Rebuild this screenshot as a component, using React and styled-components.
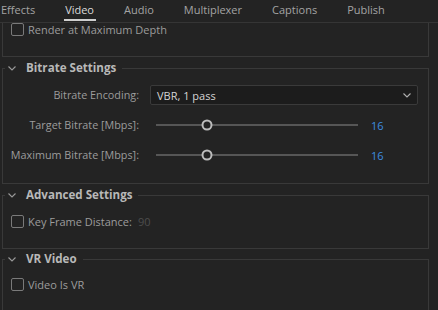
import React from 'react'
import styled, { createGlobalStyle } from 'styled-components'

const GlobalStyle = createGlobalStyle`
  html, body {
    margin: 0;
    padding: 0;
    background: #232323;
  }
  body {
    font-family: "Open Sans", "Noto Sans", sans-serif;
    font-size: 11px;
    color: #a2a2a2;
    overflow: hidden;
  }
`

const Page = styled.div`
  width: 438px;
  height: 310px;
  overflow: hidden;
  background: #232323;
`

// tabs across the top
const TabBar = styled.div`
  display: flex;
  gap: 30px;
  height: 22px;
  padding-left: 1px;
  border-bottom: 1px solid #353535;
`

const Tab = styled.div`
  position: relative;
  line-height: 20px;
  color: ${(p) => (p.$active ? '#dadada' : '#a3a3a3')};

  &::after {
    content: '';
    display: ${(p) => (p.$active ? 'block' : 'none')};
    position: absolute;
    left: -1px;
    right: -2px;
    top: 19px;
    height: 2px;
    background: #cfcfcf;
  }
`

const Content = styled.div`
  display: flex;
  flex-direction: column;
  padding: 0 9px 0 2px;
`

const Panel = styled.fieldset`
  margin: ${(p) => p.$gap || 0}px 0 0;
  padding: 0;
  min-width: 0;
  border: 1px solid #393939;
  border-top: ${(p) => (p.$clipped ? 'none' : '1px solid #393939')};
`

const Legend = styled.legend`
  display: flex;
  align-items: center;
  gap: 10px;
  margin-left: 2px;
  padding: 0 6px 0 3px;
  height: 16px;
  line-height: 16px;
  font-size: 11.6px;
  font-weight: 700;
  color: #b8b8b8;
`

const Body = styled.div`
  padding: ${(p) => p.$pad};
`

const FormGrid = styled.div`
  display: grid;
  grid-template-columns: 136px 1fr;
  column-gap: 11px;
  row-gap: 10px;
  align-items: center;
`

const Label = styled.div`
  text-align: right;
  white-space: nowrap;
  font-size: 10.8px;
  color: #9c9c9c;
  line-height: 20px;
`

const Select = styled.div`
  display: flex;
  align-items: center;
  justify-content: space-between;
  height: 18px;
  padding: 0 6px 0 6px;
  background: #1c1c1c;
  border: 1px solid #3a3a3a;
  border-radius: 2px;
  color: #d4d4d4;
`

const SliderRow = styled.div`
  display: flex;
  align-items: center;
  height: 20px;
`

const Track = styled.div`
  position: relative;
  width: 202px;
  height: 20px;
  margin-left: 6px;

  &::before {
    content: '';
    position: absolute;
    left: 0;
    right: 0;
    top: 9px;
    height: 2px;
    background: #565656;
  }
`

const Thumb = styled.div`
  position: absolute;
  top: 10px;
  width: 7px;
  height: 7px;
  border: 2px solid #bdbdbd;
  border-radius: 50%;
  background: #232323;
  transform: translate(-50%, -50%);
`

const Value = styled.span`
  margin-left: ${(p) => (p.$dim ? 2 : 13)}px;
  color: ${(p) => (p.$dim ? '#4d4d4d' : '#3d8de0')};
`

const CheckRow = styled.label`
  display: flex;
  align-items: center;
  gap: 4px;
  height: 13px;
  color: #9c9c9c;
  white-space: nowrap;
`

const Box = styled.span`
  box-sizing: border-box;
  width: 13px;
  height: 13px;
  border: 1.5px solid #7a7a7a;
  border-radius: 2px;
`

const Chevron = ({ color = '#9a9a9a' }) => (
  <svg width="8" height="5" viewBox="0 0 8 5">
    <polyline points="0.5,0.5 4,4 7.5,0.5" fill="none" stroke={color} strokeWidth="1.1" />
  </svg>
)

function Check({ label, value }) {
  return (
    <CheckRow>
      <Box />
      {label}
      {value && <Value $dim>{value}</Value>}
    </CheckRow>
  )
}

function Slider({ value, max }) {
  return (
    <SliderRow>
      <Track>
        <Thumb style={{ left: `${(value / max) * 100}%` }} />
      </Track>
      <Value>{value}</Value>
    </SliderRow>
  )
}

function Section({ title, pad, gap, children }) {
  return (
    <Panel $gap={gap}>
      <Legend>
        <Chevron />
        {title}
      </Legend>
      <Body $pad={pad}>{children}</Body>
    </Panel>
  )
}

const tabs = ['Effects', 'Video', 'Audio', 'Multiplexer', 'Captions', 'Publish']

export default function App() {
  return (
    <Page>
      <GlobalStyle />
      <TabBar>
        {tabs.map((t) => (
          <Tab key={t} $active={t === 'Video'}>{t}</Tab>
        ))}
      </TabBar>

      <Content>
        <Panel $clipped>
          <Body $pad="0 0 20px 8px">
            <Check label="Render at Maximum Depth" />
          </Body>
        </Panel>

        <Section title="Bitrate Settings" gap={3} pad="9px 10px 18px 0">
          <FormGrid>
            <Label>Bitrate Encoding:</Label>
            <Select>
              VBR, 1 pass
              <Chevron color="#b0b0b0" />
            </Select>
            <Label>Target Bitrate [Mbps]:</Label>
            <Slider value={16} max={64} />
            <Label>Maximum Bitrate [Mbps]:</Label>
            <Slider value={16} max={64} />
          </FormGrid>
        </Section>

        <Section title="Advanced Settings" gap={3} pad="12px 0 20px 8px">
          <Check label="Key Frame Distance:" value="90" />
        </Section>

        <Section title="VR Video" gap={2} pad="11px 0 21px 8px">
          <Check label="Video Is VR" />
        </Section>
      </Content>
    </Page>
  )
}
